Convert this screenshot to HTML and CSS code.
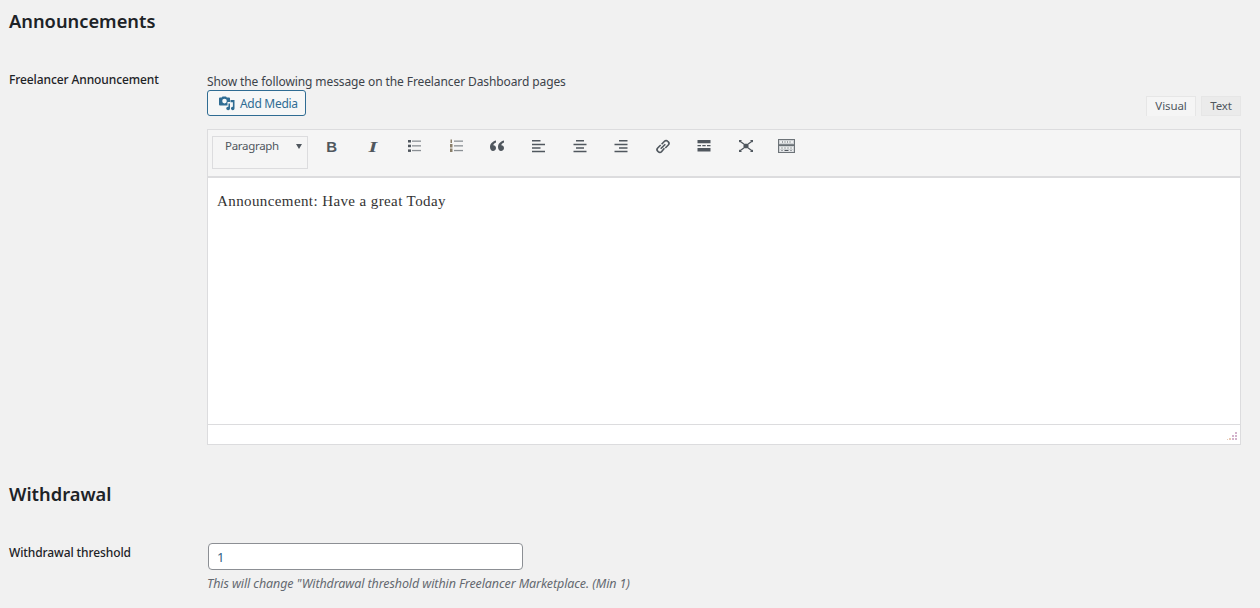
FILE: index.html
```html
<!DOCTYPE html>
<html lang="en">
<head>
<meta charset="utf-8">
<title>Freelancer Settings</title>
<link rel="stylesheet" href="styles.css">
</head>
<body>
<main class="page">
  <h2 class="section-title first">Announcements</h2>
  <div class="row">
    <label class="row-label">Freelancer Announcement</label>
    <div class="row-field">
      <p class="lead">Show the following message on the Freelancer Dashboard pages</p>
      <div class="editor-head">
        <button class="media-btn" type="button">
          <svg class="media-icon" width="16" height="16" viewBox="0 0 16 16"><path fill="#2f6c93" fill-rule="evenodd" d="M3.500 1.500h3.500l.8 1H10a1 1 0 0 1 1 1V7H8.500v3.500H1a1 1 0 0 1-1-1v-6a1 1 0 0 1 1-1h1.700zM5.500 3.800a2.300 2.300 0 1 0 0 4.600 2.300 2.300 0 0 0 0-4.600z"/><path fill="#2f6c93" d="M11.500 5h4v8.500a1.800 1.700 0 1 1-1.600-1.700V7.300h-2.400zM10 8.500h1v5a1.900 1.700 0 1 1-1.600-1.700l.1-3.300z"/></svg>
          <span class="media-label">Add Media</span>
        </button>
        <div class="tabs">
          <span class="tab tab-visual">Visual</span>
          <span class="tab tab-text">Text</span>
        </div>
      </div>
      <div class="editor">
        <div class="toolbar">
          <div class="format-select"><span>Paragraph</span><i class="caret"></i></div>
          <div class="tools">
            <span class="tool"><b class="glyph-b">B</b></span>
            <span class="tool"><em class="glyph-i">I</em></span>
            <span class="tool"><svg width="16" height="16" viewBox="0 0 16 16"><g fill="#50575e"><rect x="2" y="1" width="3" height="2.500"/><rect x="2" y="5.700" width="3" height="2.500"/><rect x="2" y="10.400" width="3" height="2.500"/></g><g fill="#8a8f94"><rect x="6" y="1.500" width="9" height="1.300"/><rect x="6" y="6.200" width="9" height="1.300"/><rect x="6" y="10.900" width="9" height="1.300"/></g></svg></span>
            <span class="tool"><svg width="16" height="16" viewBox="0 0 16 16"><g fill="#8a7f6a"><rect x="2.500" y=".5" width="1.500" height="3.500"/><rect x="2" y="5" width="2.500" height="3.500"/><rect x="2" y="9.500" width="2.500" height="3.500"/></g><g fill="#8a8f94"><rect x="6" y="1.500" width="9" height="1.300"/><rect x="6" y="6.200" width="9" height="1.300"/><rect x="6" y="10.900" width="9" height="1.300"/></g></svg></span>
            <span class="tool"><svg width="16" height="16" viewBox="0 0 16 16"><path fill="#50575e" d="M7 1.500C4 2.300 1 4.500 1 8c0 2 1.200 4 3 4s3-1.300 3-2.900C7 7.500 5.900 6.300 4.300 6.300 4.600 5.200 5.700 4 7 3.600zM15 1.500c-3 .8-6 3-6 6.500 0 2 1.200 4 3 4s3-1.300 3-2.900c0-1.600-1.100-2.800-2.700-2.800.3-1.100 1.400-2.300 2.700-2.700z"/></svg></span>
            <span class="tool"><svg width="16" height="16" viewBox="0 0 16 16"><path fill="#50575e" d="M1 1h8.500v1.500H1zM1 4.700h13v1.500H1zM1 8.300h8.500v1.500H1zM1 11.800h13v1.500H1z"/></svg></span>
            <span class="tool"><svg width="16" height="16" viewBox="0 0 16 16"><path fill="#50575e" d="M4 1h8v1.500H4zM1.500 4.700h13v1.500h-13zM4 8.300h8v1.500H4zM1.500 11.800h13v1.500h-13z"/></svg></span>
            <span class="tool"><svg width="16" height="16" viewBox="0 0 16 16"><path fill="#50575e" d="M6 1h8.500v1.500H6zM1.500 4.700h13v1.500h-13zM6 8.300h8.500v1.500H6zM1.500 11.800h13v1.500h-13z"/></svg></span>
            <span class="tool"><svg width="16" height="16" viewBox="0 0 16 16"><g fill="none" stroke="#50575e" stroke-width="1.600"><path d="M6.600 5.300 9.500 2.300a2.200 2.200 0 0 1 3.200 0l.6.600a2.200 2.200 0 0 1 0 3.100l-3 3"/><path d="M9.400 9.200 6.500 12.700a2.200 2.200 0 0 1-3.200 0l-.6-.6a2.200 2.200 0 0 1 0-3.100l3-3"/><path d="M5.700 9.800 10.300 5.200"/></g></svg></span>
            <span class="tool"><svg width="16" height="16" viewBox="0 0 16 16"><path fill="#50575e" d="M1.500 1h13v3.300h-13zM1.500 6h3.500v1.300H1.500zM6.300 6h3.400v1.300H6.300zM11 6h3.500v1.300H11zM1.500 9h13v3.500h-13z"/></svg></span>
            <span class="tool"><svg width="16" height="16" viewBox="0 0 16 16"><path fill="none" stroke="#50575e" stroke-width="1.300" d="M2 2.200 5.800 5M14 2.200 10.200 5M2 11.800 5.800 9M14 11.800 10.200 9"/><path fill="#50575e" d="M5.500 4.700h5v4.600h-5zM1 1h3.200L1 3.600zM15 1h-3.200L15 3.600zM1 13h3.200L1 10.400zM15 13h-3.200L15 10.400z"/></svg></span>
            <span class="tool"><svg width="17" height="16" viewBox="0 0 17 16"><rect x=".5" y=".5" width="16" height="13" fill="#d0d3d6" stroke="#6d7378"/><rect x="1" y="5.400" width="15" height="1.400" fill="#50575e"/><g fill="#eef0f1"><rect x="2" y="2" width="13" height="2"/><rect x="2" y="8" width="13" height="2"/><rect x="2" y="11" width="13" height="1.500"/></g><g fill="#50575e"><path d="M4 2.500h1v1H4zM6.500 2.500h1v1h-1zM9 2.500h1v1H9zM11.500 2.500h1v1h-1zM3.500 8.500h1v1h-1zM6.500 8.500h1v1h-1zM9.500 8.500h1v1h-1zM12.500 8.500h1v1h-1zM3.500 11h1v1h-1zM6.500 11h4v1h-4zM12.500 11h1v1h-1z"/></g></svg></span>
          </div>
        </div>
        <div class="content">Announcement: Have a great Today</div>
        <div class="statusbar">
          <svg class="grip" width="10" height="10" viewBox="0 0 10 10"><g fill="#d3b3cc"><rect x="8" y="0" width="2" height="2"/><rect x="8" y="3" width="2" height="2"/><rect x="8" y="6" width="2" height="2"/><rect x="5" y="3" width="2" height="2"/><rect x="5" y="6" width="2" height="2"/></g><g fill="#e8c8b4"><rect x="2" y="6" width="2" height="2"/><rect x="0" y="7" width="1" height="1"/></g></svg>
        </div>
      </div>
    </div>
  </div>
  <h2 class="section-title">Withdrawal</h2>
  <div class="row row-threshold">
    <label class="row-label">Withdrawal threshold</label>
    <div class="row-field">
      <input class="text-input" type="text" value="1">
      <p class="hint">This will change "Withdrawal threshold within Freelancer Marketplace. (Min 1)</p>
    </div>
  </div>
</main>
</body>
</html>
```

FILE: styles.css
```css
* { box-sizing: border-box; }
html, body { margin: 0; padding: 0; }
body {
  background: #f1f1f1;
  color: #3c434a;
  font-family: "Noto Sans", "Open Sans", sans-serif;
  font-size: 12px;
  letter-spacing: -0.1px;
  line-height: 17px;
}
.page { padding: 0 19px 0 9px; }
.section-title {
  margin: 37px 0 0;
  color: #1d2327;
  font-size: 18.3px;
  line-height: 24px;
  font-weight: 600;
  letter-spacing: 0;
}
.section-title.first { margin-top: 0; padding-top: 9px; }
.row { display: flex; margin-top: 35px; }
.row-label {
  flex: 0 0 198px;
  color: #1d2327;
  font-weight: 500;
  padding-top: 3px;
}
.row-field { width: 1034px; }
.lead { margin: 0; padding-top: 5px; line-height: 17px; }
.editor-head {
  display: flex;
  justify-content: space-between;
  height: 37px;
}
.media-btn {
  display: inline-flex;
  align-items: center;
  height: 26px;
  width: 99px;
  padding: 0 0 0 11px;
  background: #f6f7f7;
  border: 1px solid #2f6c93;
  border-radius: 3px;
  color: #2f6c93;
  font: inherit;
  letter-spacing: -0.3px;
  gap: 5px;
}
.media-label { padding-top: 1px; }
.media-icon { flex: none; }
.tabs { display: flex; gap: 5px; margin-top: 6px; height: 20px; }
.tab {
  border: 1px solid #e6e6e6;
  background: #ebebeb;
  font-size: 11.5px;
  line-height: 18px;
  text-align: center;
  color: #50575e;
}
.tab-visual { width: 50px; background: #f5f5f5; border-bottom: 0; }
.tab-text { width: 40px; }
.editor {
  margin-top: 2px;
  border: 1px solid #dcdcde;
  background: #fff;
}
.toolbar {
  display: flex;
  height: 48px;
  padding: 6px 0 0 4px;
  background: #f5f5f5;
  border-bottom: 2px solid #dcdcde;
}
.format-select {
  position: relative;
  width: 96px;
  height: 33px;
  padding: 0 0 0 12px;
  background: #f5f5f5;
  border: 1px solid #dcdcde;
  color: #50575e;
  font-size: 11.5px;
  letter-spacing: -0.3px;
  line-height: 17px;
}
.caret {
  position: absolute;
  top: 7px;
  right: 5px;
  border-left: 3.5px solid transparent;
  border-right: 3.5px solid transparent;
  border-top: 5px solid #50575e;
}
.tools { display: flex; margin-left: 3px; }
.tool {
  display: flex;
  justify-content: center;
  width: 41.4px;
  height: 20px;
  padding-top: 3px;
}
.glyph-b {
  font: 700 15px/16px "Liberation Sans", sans-serif;
  color: #50575e;
}
.glyph-i {
  font: italic 700 15px/16px "Liberation Serif", serif;
  color: #50575e;
  transform: scaleX(1.5);
}
.content {
  height: 247px;
  padding: 14px 9px;
  font-family: "Liberation Serif", Georgia, serif;
  font-size: 15px;
  letter-spacing: 0.4px;
  line-height: 19px;
  color: #333;
  border-bottom: 1px solid #dcdcde;
}
.statusbar {
  display: flex;
  justify-content: flex-end;
  height: 19px;
  padding: 7px 3px 0 0;
}
.row-threshold { margin-top: 37px; }
.row-threshold .row-label { padding-top: 1px; }
.text-input {
  display: block;
  width: 315px;
  height: 27px;
  margin-left: 1px;
  padding: 0 8px;
  background: #fff;
  border: 1px solid #8c8f94;
  border-radius: 4px;
  color: #2f5f85;
  font: inherit;
  font-size: 13px;
}
.hint {
  margin: 5px 0 0;
  font-size: 12.5px;
  font-style: italic;
  color: #646970;
  line-height: 18px;
}
```
